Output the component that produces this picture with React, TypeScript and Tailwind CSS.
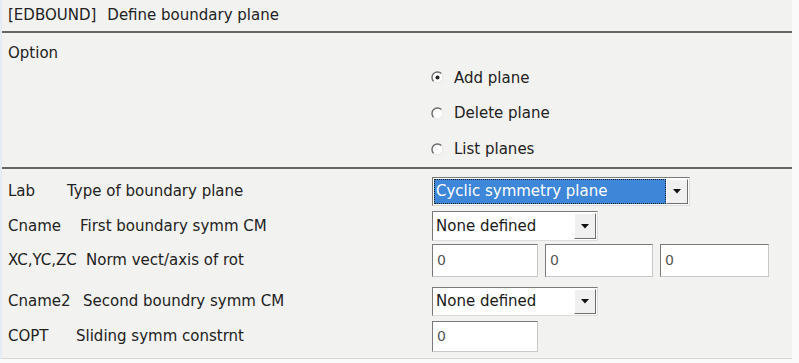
import React from "react";

const font = { fontFamily: '"DejaVu Sans", "Liberation Sans", sans-serif' };

function Radio({ checked, label }: { checked?: boolean; label: string }) {
  return (
    <div className="flex items-center h-[36px]">
      <svg width="13" height="13" viewBox="0 0 13 13" className="mr-[10px]">
        <circle cx="6.5" cy="6.5" r="5.5" fill="#ffffff" />
        <path d="M 2.6 10.4 A 5.5 5.5 0 0 1 10.4 2.6" stroke="#6a6a6a" strokeWidth="1.4" fill="none" />
        <path d="M 10.4 2.6 A 5.5 5.5 0 0 1 2.6 10.4" stroke="#e6e6e6" strokeWidth="1.2" fill="none" />
        {checked && <circle cx="6.5" cy="6.5" r="2" fill="#222" />}
      </svg>
      <span className="text-[15px] text-[#222]">{label}</span>
    </div>
  );
}

function Arrow() {
  return (
    <div className="w-[22px] h-full flex items-center justify-center bg-[#f0f0f0] border-t border-l border-t-white border-l-white border-r border-b border-r-[#6e6e6e] border-b-[#6e6e6e]">
      <svg width="8" height="5" viewBox="0 0 8 5">
        <path d="M0 0 L8 0 L4 4.5 Z" fill="#111" />
      </svg>
    </div>
  );
}

function Combo({ w, h, text, selected }: { w: string; h: string; text: string; selected?: boolean }) {
  return (
    <div className={`${w} ${h} flex bg-white border border-t-[#7a7a7a] border-l-[#7a7a7a] border-r-[#dcdcdc] border-b-[#dcdcdc] p-[1px]`}>
      <div className="flex-1 flex items-center min-w-0">
        {selected ? (
          <div className="w-full h-full bg-[#3d86d8] border border-dotted border-[#1a1a1a] flex items-center pl-[1px] text-white text-[15px]">
            {text}
          </div>
        ) : (
          <div className="pl-[2px] text-[15px] text-[#1a1a1a]">{text}</div>
        )}
      </div>
      <Arrow />
    </div>
  );
}

function Input({ w }: { w: string }) {
  return (
    <div className={`${w} h-full bg-white border border-t-[#7a7a7a] border-l-[#7a7a7a] border-r-[#c8c8c8] border-b-[#c8c8c8] flex items-center pl-[4px] text-[14px] text-[#555]`}>
      0
    </div>
  );
}

function Row({ h, mb, code, desc, descX, children }: { h: string; mb: string; code: string; desc: string; descX: string; children: React.ReactNode }) {
  return (
    <div className={`flex ${h} ${mb}`}>
      <div className="w-[432px] flex items-center pl-[8px] text-[15px] text-[#222]">
        <span className={descX}>{code}</span>
        <span>{desc}</span>
      </div>
      <div className="flex-1 flex items-stretch">{children}</div>
    </div>
  );
}

export default function App() {
  return (
    <div className="w-[799px] h-[363px] bg-[#fafafa] flex" style={font}>
      <div className="w-[792px] h-[359px] bg-[#f2f2f0] flex flex-col border-l-2 border-l-[#e4ecf5] border-b border-b-[#d8d8d8]">
        <div className="h-[33px] flex items-center pl-[6px] border-b-2 border-b-[#666] text-[15px] text-[#222]">
          <span className="mr-[11px]">[EDBOUND]</span>
          <span>Define boundary plane</span>
        </div>
        <div className="h-[136px] flex border-b-2 border-b-[#666]">
          <div className="w-[429px] pl-[6px] pt-[9px] text-[15px] text-[#222]">Option</div>
          <div className="pt-[27px] flex flex-col">
            <Radio checked label="Add plane" />
            <Radio label="Delete plane" />
            <Radio label="List planes" />
          </div>
        </div>
        <div className="flex flex-col pt-[8px] -ml-[2px]">
          <Row h="h-[29px]" mb="mb-[5px]" code="Lab" desc="Type of boundary plane" descX="w-[59px]">
            <Combo w="w-[258px]" h="h-[29px]" text="Cyclic symmetry plane" selected />
          </Row>
          <Row h="h-[30px]" mb="mb-[3px]" code="Cname" desc="First boundary symm CM" descX="w-[72px]">
            <Combo w="w-[166px]" h="h-[30px]" text="None defined" />
          </Row>
          <Row h="h-[33px]" mb="mb-[10px]" code="XC,YC,ZC" desc="Norm vect/axis of rot" descX="w-[78px]">
            <div className="flex gap-[7px] h-[33px]">
              <Input w="w-[106px]" />
              <Input w="w-[108px]" />
              <Input w="w-[109px]" />
            </div>
          </Row>
          <Row h="h-[29px]" mb="mb-[5px]" code="Cname2" desc="Second boundry symm CM" descX="w-[75px]">
            <Combo w="w-[166px]" h="h-[29px]" text="None defined" />
          </Row>
          <Row h="h-[31px]" mb="mb-[0px]" code="COPT" desc="Sliding symm constrnt" descX="w-[68px]">
            <div className="h-[31px]">
              <Input w="w-[106px]" />
            </div>
          </Row>
        </div>
      </div>
    </div>
  );
}
